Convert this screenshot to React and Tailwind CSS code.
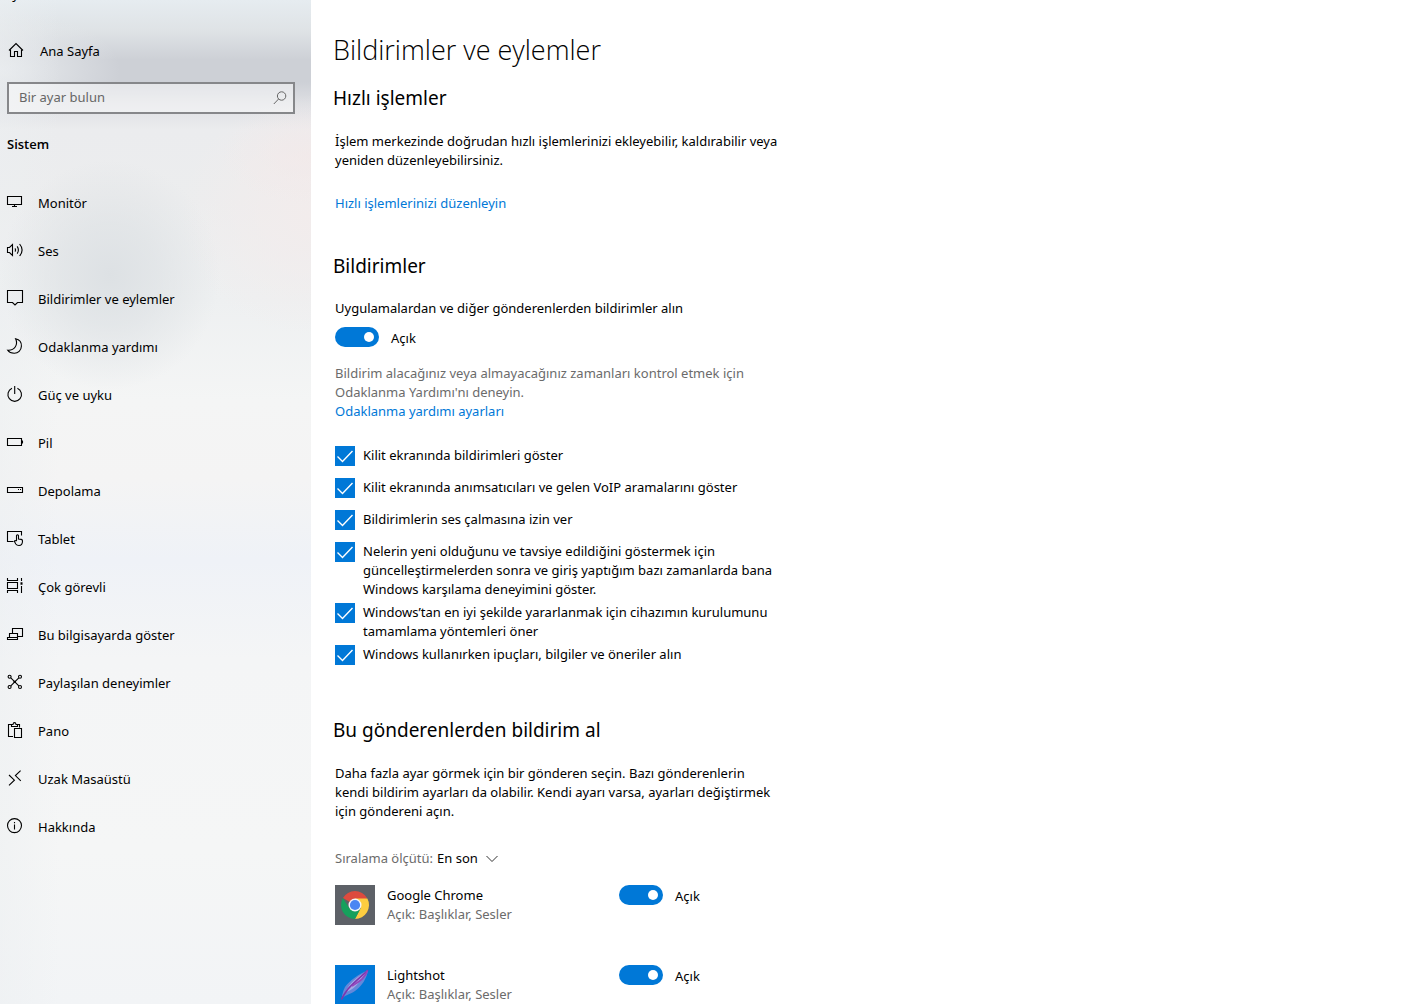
import React from "react";

const icons = {
  home: (
    <>
      <path d="M1 8.5 L8 1.5 L15 8.5" />
      <path d="M2.5 7.5 V14.5 H6.5 V9.5 H9.5 V14.5 H13.5 V7.5" />
    </>
  ),
  monitor: (
    <>
      <path d="M0.5 2.5 H14.5 V10.5 H0.5 Z" />
      <path d="M7.5 10.5 V12.5 M5 12.5 H10" />
    </>
  ),
  sound: (
    <>
      <path d="M0.5 5.5 H2.5 L5.5 2.5 V13.5 L2.5 10.5 H0.5 Z" />
      <path d="M8 6.4 Q9.2 8 8 9.6 M10.2 4.4 Q12.6 8 10.2 11.6" />
      <path d="M12.6 2 Q17.6 8 12.6 14" />
    </>
  ),
  message: <path d="M0.5 0.5 H15.5 V12.5 H10.5 L8 15 L5.5 12.5 H0.5 Z" />,
  moon: <path d="M8.6 0.7 C12.8 1.6 14.6 4.8 14.4 8.2 C14.2 12.4 11 15.4 7.2 15.3 C4.2 15.2 1.8 13.8 0.7 12.2 C4 12.4 6.6 11.4 8.2 9 C9.9 6.4 9.9 3.4 8.6 0.7 Z" />,
  power: (
    <>
      <path d="M5 2.3 A6.8 6.8 0 1 0 10.4 2.3" />
      <path d="M7.7 0 V8" />
    </>
  ),
  battery: (
    <>
      <path d="M0.5 4.5 H14.5 V11.5 H0.5 Z" />
      <path d="M15.5 6.5 V9.5" />
    </>
  ),
  storage: (
    <>
      <path d="M0.5 5.5 H15.5 V10.5 H0.5 Z" />
      <path d="M11 7.5 H12 M13 7.5 H14" />
    </>
  ),
  tablet: (
    <>
      <path d="M14.5 5.5 V1.5 H0.5 V11.5 H6.5" />
      <path d="M9.5 11 V5.6 Q10.5 4 11.5 5.6 V9 L14.3 9.4 Q15.6 9.8 15.5 11 Q15.5 15.4 12 15.5 Q9.8 15.5 8.8 14 L7.4 11.4 Q7.6 10 9.5 11" />
    </>
  ),
  multitask: (
    <>
      <path d="M0.5 0 V2.5 H10.5 V0 M0.5 4.5 H10.5 V10.5 H0.5 Z M0.5 15 V12.5 H10.5 V15" />
      <path d="M14.5 0 V3 M14.5 8 V15" />
      <path d="M13.5 5.5 H15.5" strokeWidth="2.5" />
    </>
  ),
  project: (
    <>
      <path d="M5.5 7 V2.5 H15.5 V10.5 H11" />
      <path d="M2.5 11.5 V7.5 H10.5 V11.5 M0.5 11.5 H10.5 V13.5 H0.5 Z" />
    </>
  ),
  shared: (
    <>
      <path d="M3.8 3.8 L11.8 11.8 M11.8 3.8 L3.8 11.8" />
      <circle cx="2.6" cy="2.8" r="1.5" />
      <circle cx="13" cy="2.8" r="1.5" />
      <circle cx="2.6" cy="13" r="1.5" />
      <circle cx="13" cy="13" r="1.5" />
      <path d="M6.5 7.8 H9" strokeWidth="2" />
    </>
  ),
  clipboard: (
    <>
      <path d="M6 14.5 H1.5 V2.5 H4.5 M10.5 2.5 H12.5 V5.5" />
      <path d="M4.5 4 V2.5 H6 Q6.2 0.6 7.5 0.6 Q8.8 0.6 9 2.5 H10.5 V4.5 H4.5 Z" />
      <path d="M7.5 6.5 H14.5 V15.5 H7.5 Z" />
    </>
  ),
  remote: <path d="M2 5 L7.4 10.2 L2 15.4 M13.6 0.6 L8.4 5.6 L13.8 10.8" />,
  info: (
    <>
      <circle cx="7.5" cy="7.6" r="7" />
      <path d="M7.5 6.5 V11.5 M7.5 4 V5.2" />
    </>
  ),
};

function Icon({ name, className = "" }) {
  return (
    <svg viewBox="0 0 16 16" className={"size-4 shrink-0 overflow-visible " + className} fill="none" stroke="currentColor" strokeWidth="1.1" aria-hidden="true">
      {icons[name]}
    </svg>
  );
}

const nav = [
  ["monitor", "Monitör"],
  ["sound", "Ses"],
  ["message", "Bildirimler ve eylemler"],
  ["moon", "Odaklanma yardımı"],
  ["power", "Güç ve uyku"],
  ["battery", "Pil"],
  ["storage", "Depolama"],
  ["tablet", "Tablet"],
  ["multitask", "Çok görevli"],
  ["project", "Bu bilgisayarda göster"],
  ["shared", "Paylaşılan deneyimler"],
  ["clipboard", "Pano"],
  ["remote", "Uzak Masaüstü"],
  ["info", "Hakkında"],
];

const options = [
  "Kilit ekranında bildirimleri göster",
  "Kilit ekranında anımsatıcıları ve gelen VoIP aramalarını göster",
  "Bildirimlerin ses çalmasına izin ver",
  "Nelerin yeni olduğunu ve tavsiye edildiğini göstermek için güncelleştirmelerden sonra ve giriş yaptığım bazı zamanlarda bana Windows karşılama deneyimini göster.",
  "Windows’tan en iyi şekilde yararlanmak için cihazımın kurulumunu tamamlama yöntemleri öner",
  "Windows kullanırken ipuçları, bilgiler ve öneriler alın",
];

function Toggle({ label }) {
  return (
    <label className="flex items-start gap-3">
      <input type="checkbox" role="switch" defaultChecked aria-label={label} className="peer sr-only" />
      <span className="flex h-5 w-11 items-center justify-start rounded-full bg-[#7a7a7a] px-[5px] peer-checked:justify-end peer-checked:bg-[#0078d7]">
        <span className="size-2.5 rounded-full bg-white" />
      </span>
      <span className="pt-0.5">Açık</span>
    </label>
  );
}

function Option({ text }) {
  return (
    <li className="min-h-8 pb-1">
      <label className="flex items-start gap-2">
        <input type="checkbox" defaultChecked className="peer sr-only" />
        <span className="flex size-5 shrink-0 items-center justify-center border-2 border-[#333] text-transparent peer-checked:border-[#0078d7] peer-checked:bg-[#0078d7] peer-checked:text-white">
          <svg viewBox="0 0 20 20" className="size-5 shrink-0" fill="none" stroke="currentColor" strokeWidth="1.4" aria-hidden="true">
            <path d="M2.5 10.5 L7.5 15.5 L17.5 5" />
          </svg>
        </span>
        <span>{text}</span>
      </label>
    </li>
  );
}

function ChromeLogo() {
  return (
    <svg viewBox="0 0 40 40" className="size-10 shrink-0 bg-[#5d6167]" aria-hidden="true">
      <path d="M20 20 L7.9 13 A14 14 0 0 1 32.1 13 Z" fill="#dd4b3e" />
      <path d="M20 13.5 H32.4 A14 14 0 0 1 20 34 L25.6 23.2 Z" fill="#fdcd40" />
      <path d="M7.9 13 L14.4 23.2 L20 26.5 L25.6 23.2 L20 34 A14 14 0 0 1 7.9 13 Z" fill="#16a05c" />
      <circle cx="20" cy="20" r="6.5" fill="#f4f6fa" />
      <circle cx="20" cy="20" r="5.1" fill="#4a87f2" />
    </svg>
  );
}

function LightshotLogo() {
  return (
    <svg viewBox="0 0 40 40" className="size-10 shrink-0 bg-[#0078d7]" aria-hidden="true">
      <path d="M33 5 C24 9 14 16 10 22 C8 25.5 7 31 6.5 34.5 C9 30 15 29.5 20 26 C27 21 32 13 33 5 Z" fill="#8f8fdc" opacity="0.7" />
      <path d="M31 7 C23 11 14 18 10.5 27 C17 26 25 18 31 7 Z" fill="#d3bcec" opacity="0.6" />
      <path d="M33 5 C27 11 19 17 13 24 C10 28 8 31 6.5 34.5" fill="none" stroke="#7e35ad" strokeWidth="1.6" />
      <path d="M32.5 5.5 C31 12 25 16 17 21" fill="none" stroke="#9446bd" strokeWidth="1.8" />
    </svg>
  );
}

const senders = [
  ["Google Chrome", ChromeLogo],
  ["Lightshot", LightshotLogo],
];

const backdrop =
  "bg-[#f4f5f6] bg-[radial-gradient(ellipse_110px_115px_at_110px_275px,#dde1e4_0%,#dde1e4a0_45%,#dde1e400_100%),radial-gradient(ellipse_90px_50px_at_311px_155px,#f3e8e8a0_0%,#f3e8e800_100%),radial-gradient(ellipse_130px_120px_at_311px_215px,#f2ecec_0%,#f2ecec90_50%,#f2ecec00_100%),linear-gradient(90deg,#eceff180_0px,#eceff100_60px),radial-gradient(ellipse_120px_60px_at_0px_70px,#e6e9ec_0%,#e6e9ec90_50%,#e6e9ec00_100%),linear-gradient(180deg,#e6ecf0_0px,#dfe3e6_30px,#cdd0d6_60px,#cdd0d6_82px,#dfe0e4_105px,#ebecee_130px,#ecedee_200px,#eef0f1_300px,#f4f5f5_400px,#f4f4f4_480px,#eff2f7_560px,#f4f5f6_660px,#f5f6f6_850px,#f2f4f6_1004px)]";

export default function App() {
  return (
    <div className="flex h-screen overflow-hidden bg-white font-['Noto_Sans',sans-serif] text-[13px] leading-[19px] text-black">
      <aside className={"w-[311px] shrink-0 " + backdrop}>
        <div className="flex h-0.5 items-end overflow-hidden pl-1">
          <span className="leading-4">Ayarlar</span>
        </div>
        <a href="#home" className="mt-[25px] flex h-12 items-center gap-4 pl-2">
          <Icon name="home" className="mb-0.5" />
          <span>Ana Sayfa</span>
        </a>
        <label className="mr-4 ml-[7px] mt-[7px] flex h-8 items-center border-2 border-[#86878a] bg-white/45 pr-1.5 pl-2.5">
          <input type="text" placeholder="Bir ayar bulun" aria-label="Bir ayar bulun" className="mb-0.5 min-w-0 flex-1 bg-transparent outline-none placeholder:text-[#666]" />
          <svg viewBox="0 0 14 14" className="size-3.5 shrink-0" fill="none" stroke="#666" strokeWidth="1" aria-hidden="true">
            <circle cx="8.6" cy="5" r="4.2" />
            <path d="M5.6 8 L0.8 13" />
          </svg>
        </label>
        <h2 className="mt-[21px] pl-[7px] font-['Open_Sans',sans-serif] font-semibold">Sistem</h2>
        <nav className="mt-[25px]">
          {nav.map(([icon, label]) => (
            <a key={label} href={"#" + icon} className="flex h-12 items-center gap-[15px] pl-[7px]">
              <Icon name={icon} className="mb-0.5" />
              <span>{label}</span>
            </a>
          ))}
        </nav>
      </aside>

      <main className="min-w-0 flex-1 pt-8 pl-[22px]">
        <h1 className="font-['Open_Sans',sans-serif] text-[27px] leading-9 font-light">Bildirimler ve eylemler</h1>

        <section className="max-w-[447px]">
          <h2 className="mt-4 text-[19px] leading-7">Hızlı işlemler</h2>
          <div className="pl-0.5">
            <p className="mt-5">İşlem merkezinde doğrudan hızlı işlemlerinizi ekleyebilir, kaldırabilir veya yeniden düzenleyebilirsiniz.</p>
            <a href="#quick" className="mt-6 block text-[#0078d7]">Hızlı işlemlerinizi düzenleyin</a>
          </div>
        </section>

        <section className="mt-[39px] max-w-[447px]">
          <h2 className="text-[19px] leading-7">Bildirimler</h2>
          <div className="pl-0.5">
            <p className="mt-[19px] mb-[9px]">Uygulamalardan ve diğer gönderenlerden bildirimler alın</p>
            <Toggle label="Uygulamalardan ve diğer gönderenlerden bildirimler alın" />
            <p className="mt-4 text-[#6b6b6b]">Bildirim alacağınız veya almayacağınız zamanları kontrol etmek için Odaklanma Yardımı'nı deneyin.</p>
            <a href="#focus" className="block text-[#0078d7]">Odaklanma yardımı ayarları</a>
            <ul className="mt-[25px]">
              {options.map((text) => (
                <Option key={text} text={text} />
              ))}
            </ul>
          </div>
        </section>

        <section className="mt-[39px] max-w-[447px]">
          <h2 className="text-[19px] leading-7">Bu gönderenlerden bildirim al</h2>
          <div className="pl-0.5">
            <p className="mt-5">Daha fazla ayar görmek için bir gönderen seçin. Bazı gönderenlerin kendi bildirim ayarları da olabilir. Kendi ayarı varsa, ayarları değiştirmek için göndereni açın.</p>
            <div className="mt-7 flex items-center gap-1">
              <label htmlFor="sort" className="text-[#6b6b6b]">Sıralama ölçütü:</label>
              <div className="grid items-center">
                <select id="sort" className="col-start-1 row-start-1 w-[61px] appearance-none bg-transparent">
                  <option>En son</option>
                  <option>Ad</option>
                </select>
                <svg viewBox="0 0 12 8" className="pointer-events-none col-start-1 row-start-1 h-2 w-3 justify-self-end" fill="none" stroke="#333" strokeWidth="1" aria-hidden="true">
                  <path d="M0.5 1 L6 6.5 L11.5 1" />
                </svg>
              </div>
            </div>
            <ul className="mt-[17px]">
              {senders.map(([name, Logo]) => (
                <li key={name} className="flex h-20 items-start">
                  <Logo />
                  <div className="ml-3 w-[232px] pt-px">
                    <p>{name}</p>
                    <p className="text-[#6b6b6b]">Açık: Başlıklar, Sesler</p>
                  </div>
                  <Toggle label={name} />
                </li>
              ))}
            </ul>
          </div>
        </section>
      </main>
    </div>
  );
}
